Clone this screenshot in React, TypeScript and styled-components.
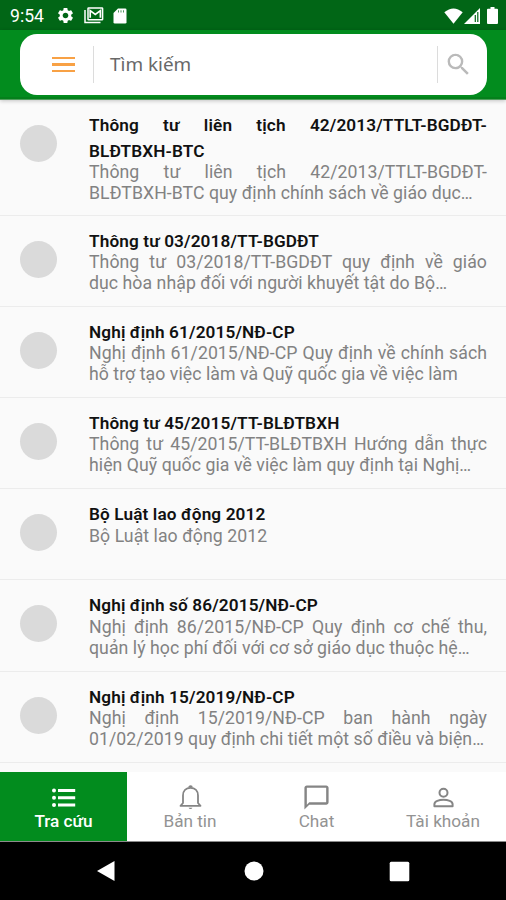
import React from "react";
import styled, { createGlobalStyle } from "styled-components";
import { MdSettings, MdSearch, MdChatBubbleOutline } from "react-icons/md";

const GlobalStyle = createGlobalStyle`
  * { box-sizing: border-box; }
  body { margin: 0; background: #fafafa; font-family: Roboto, "Noto Sans", sans-serif; }
`;

const Screen = styled.div`
  display: flex;
  flex-direction: column;
  width: 506px;
  height: 900px;
  overflow: hidden;
  background: #fafafa;
`;

const StatusBar = styled.div`
  display: flex;
  align-items: center;
  flex: 0 0 30px;
  padding: 1px 8px 0 10px;
  background: #016616;
  color: #fff;
`;

const Clock = styled.span`
  width: 46px;
  font-size: 17.6px;
  line-height: 20px;
  font-weight: 400;
`;

const StatusIcons = styled.div<{ $gap: number; $end?: boolean }>`
  display: flex;
  align-items: center;
  gap: ${(p) => p.$gap}px;
  margin-left: ${(p) => (p.$end ? "auto" : "0")};
  svg { display: block; }
`;

const BatterySlot = styled.span`
  margin-left: 6px;
`;

const AppBar = styled.header`
  flex: 0 0 69px;
  padding: 4px 19px 4px 20px;
  background: #028c1e;
  border-bottom: 1px solid #4f9f5c;
  box-shadow: inset 0 -2px 0 #04801b, 0 1px 4px rgba(0, 0, 0, 0.22);
`;

const SearchBox = styled.div`
  display: flex;
  align-items: center;
  height: 61px;
  padding: 0 14px 0 32px;
  border-radius: 17px;
  background: #fff;
`;

const Burger = styled.div`
  display: flex;
  flex-direction: column;
  gap: 4px;
  width: 23px;
`;

const BurgerLine = styled.span`
  height: 2.4px;
  background: #f8a145;
`;

const Separator = styled.span<{ $left: number; $right: number }>`
  width: 1px;
  height: 37px;
  margin: 0 ${(p) => p.$right}px 0 ${(p) => p.$left}px;
  background: #dcdcdc;
`;

const Placeholder = styled.span`
  flex: 1;
  margin-top: -2px;
  font-family: "Noto Sans", sans-serif;
  font-size: 18.9px;
  line-height: 26px;
  color: #686868;
`;

const List = styled.main`
  flex: 1;
  min-height: 0;
  overflow: hidden;
`;

const Row = styled.article`
  display: flex;
  padding: 12px 19px 10.9px 20px;
  border-bottom: 1px solid #ececec;
  min-height: 91.1px;
`;

const Avatar = styled.span`
  flex: 0 0 37px;
  height: 37px;
  margin: 13px 32px 0 0;
  border-radius: 50%;
  background: #dadada;
`;

const RowText = styled.div`
  width: 398px;
`;

const Line = styled.span<{ $fill: boolean }>`
  display: block;
  white-space: nowrap;
  text-align: justify;
  text-align-last: ${(p) => (p.$fill ? "justify" : "left")};
`;

const Title = styled.h2`
  margin: 0;
  font-size: 17.2px;
  letter-spacing: 0.12px;
  line-height: 26px;
  font-weight: 600;
  color: #111;
`;

const Summary = styled.p`
  margin: -1.8px 0 0;
  font-size: 17.7px;
  letter-spacing: 0.05px;
  line-height: 21px;
  color: #828282;
`;

const Tabs = styled.nav`
  display: grid;
  grid-template-columns: 127px 126px 127px 126px;
  flex: 0 0 70px;
  background: #fff;
  border-bottom: 1px solid #8b8b8b;
`;

const Tab = styled.div<{ $active: boolean }>`
  display: flex;
  flex-direction: column;
  align-items: center;
  padding-top: 10.5px;
  background: ${(p) => (p.$active ? "#028c1e" : "#fff")};
  color: ${(p) => (p.$active ? "#fff" : "#858585")};
  svg { display: block; }
`;

const TabLabel = styled.span<{ $active: boolean }>`
  margin-top: -0.7px;
  font-size: 17.2px;
  line-height: 20px;
  font-weight: ${(p) => (p.$active ? 500 : 400)};
  color: ${(p) => (p.$active ? "#fff" : "#939393")};
`;

const SystemNav = styled.footer`
  display: flex;
  align-items: center;
  flex: 0 0 58px;
  padding: 0 96px;
  gap: 129px;
  background: #000;

  svg:last-child { margin-left: -4px; }
`;

type Doc = { title: string[]; summary: string[] };

const docs: Doc[] = [
  {
    title: ["Thông tư liên tịch 42/2013/TTLT-BGDĐT-", "BLĐTBXH-BTC"],
    summary: ["Thông tư liên tịch 42/2013/TTLT-BGDĐT-", "BLĐTBXH-BTC quy định chính sách về giáo dục…"],
  },
  {
    title: ["Thông tư 03/2018/TT-BGDĐT"],
    summary: ["Thông tư 03/2018/TT-BGDĐT quy định về giáo", "dục hòa nhập đối với người khuyết tật do Bộ…"],
  },
  {
    title: ["Nghị định 61/2015/NĐ-CP"],
    summary: ["Nghị định 61/2015/NĐ-CP Quy định về chính sách", "hỗ trợ tạo việc làm và Quỹ quốc gia về việc làm"],
  },
  {
    title: ["Thông tư 45/2015/TT-BLĐTBXH"],
    summary: ["Thông tư 45/2015/TT-BLĐTBXH Hướng dẫn thực", "hiện Quỹ quốc gia về việc làm quy định tại Nghị…"],
  },
  { title: ["Bộ Luật lao động 2012"], summary: ["Bộ Luật lao động 2012"] },
  {
    title: ["Nghị định số 86/2015/NĐ-CP"],
    summary: ["Nghị định 86/2015/NĐ-CP Quy định cơ chế thu,", "quản lý học phí đối với cơ sở giáo dục thuộc hệ…"],
  },
  {
    title: ["Nghị định 15/2019/NĐ-CP"],
    summary: ["Nghị định 15/2019/NĐ-CP ban hành ngày", "01/02/2019 quy định chi tiết một số điều và biện…"],
  },
];

const ListIcon = () => (
  <svg width="29" height="29" viewBox="0 0 29 29" fill="currentColor">
    <circle cx="5" cy="7.5" r="2" />
    <circle cx="5" cy="14.700" r="2" />
    <circle cx="5" cy="22" r="2" />
    <path d="M9 6h17.200v3H9zM9 13.200h17.200v3H9zM9 20.500h17.200v3H9z" />
  </svg>
);

const BellIcon = () => (
  <svg width="29" height="29" viewBox="0 0 29 29" fill="none" stroke="currentColor" strokeWidth="1.800" strokeLinejoin="round">
    <path d="M4.500 22.800h20L22 20v-7.500c0-4.600-3-7.700-7.500-7.700S7 7.900 7 12.500V20z" />
    <path d="M13.100 4.600a1.400 1.400 0 0 1 2.800 0" />
    <path d="M12.600 24.700a2 2 0 0 0 3.800 0z" fill="currentColor" stroke="none" />
  </svg>
);

const PersonIcon = () => (
  <svg width="29" height="29" viewBox="0 0 29 29" fill="none" stroke="currentColor" strokeWidth="2" strokeLinejoin="round">
    <circle cx="14.500" cy="9.700" r="4" />
    <path d="M5.400 23.200v-2c0-2.800 4.700-4.400 9.100-4.400s9.100 1.600 9.100 4.400v2z" />
  </svg>
);

const ChatIcon = () => <MdChatBubbleOutline size={29} />;

const tabs = [
  { label: "Tra cứu", Icon: ListIcon },
  { label: "Bản tin", Icon: BellIcon },
  { label: "Chat", Icon: ChatIcon },
  { label: "Tài khoản", Icon: PersonIcon },
];

const Lines = ({ lines }: { lines: string[] }) => (
  <>
    {lines.map((text, i) => (
      <Line key={i} $fill={i < lines.length - 1}>{text}</Line>
    ))}
  </>
);

const MailIcon = () => (
  <svg width="20" height="17" viewBox="0 0 20 17" fill="none" stroke="#fff">
    <path d="M1 3v12.600h15.500" strokeWidth="1.500" />
    <rect x="4" y="1" width="14.600" height="11.800" rx=".6" strokeWidth="1.500" />
    <path d="M6.200 10.800V3.600l5.100 3.800 5.100-3.800v7.200" strokeWidth="1.700" />
  </svg>
);

const CardIcon = () => (
  <svg width="14" height="16" viewBox="0 0 14 16">
    <path d="M5 .5h7.200q1.300 0 1.300 1.300v12.400q0 1.300-1.300 1.300H1.800Q.5 15.500.5 14.200V5z" fill="#fff" />
    <path d="M5.500 2.300v2.200M8 2.300v2.200M10.500 2.300v2.200" stroke="#016616" strokeWidth="1" opacity=".7" />
  </svg>
);

const WifiIcon = () => (
  <svg width="19" height="16" viewBox="0 0 19 16">
    <path d="M.3 4.300Q9.500-3.300 18.700 4.300L9.500 15.800z" fill="#fff" />
  </svg>
);

const SignalIcon = () => (
  <svg width="16" height="16" viewBox="0 0 16 16">
    <path d="M0 16 16 0v16z" fill="#fff" />
    <path d="M11.300 7v7M13.800 4v10" stroke="#016616" strokeWidth="1.200" />
  </svg>
);

const BatteryIcon = () => (
  <svg width="11" height="17" viewBox="0 0 11 17">
    <path d="M3.500 0h4v1.700H10q1 0 1 1V16q0 1-1 1H1q-1 0-1-1V2.700q0-1 1-1h2.500z" fill="#fff" />
  </svg>
);

export default function App() {
  return (
    <Screen>
      <GlobalStyle />
      <StatusBar>
        <Clock>9:54</Clock>
        <StatusIcons $gap={9}>
          <MdSettings size={19} />
          <MailIcon />
          <CardIcon />
        </StatusIcons>
        <StatusIcons $gap={1} $end>
          <WifiIcon />
          <SignalIcon />
          <BatterySlot><BatteryIcon /></BatterySlot>
        </StatusIcons>
      </StatusBar>
      <AppBar>
        <SearchBox>
          <Burger>
            <BurgerLine />
            <BurgerLine />
            <BurgerLine />
          </Burger>
          <Separator $left={18} $right={16} />
          <Placeholder>Tìm kiếm</Placeholder>
          <Separator $left={0} $right={6} />
          <MdSearch size={29} color="#bababa" />
        </SearchBox>
      </AppBar>
      <List>
        {docs.map((doc) => (
          <Row key={doc.title[0]}>
            <Avatar />
            <RowText>
              <Title><Lines lines={doc.title} /></Title>
              <Summary><Lines lines={doc.summary} /></Summary>
            </RowText>
          </Row>
        ))}
      </List>
      <Tabs>
        {tabs.map(({ label, Icon }, i) => (
          <Tab key={label} $active={i === 0}>
            <Icon />
            <TabLabel $active={i === 0}>{label}</TabLabel>
          </Tab>
        ))}
      </Tabs>
      <SystemNav>
        <svg width="19" height="22" viewBox="0 0 19 22"><path d="M1 11 18.500 1v20z" fill="#fff" /></svg>
        <svg width="20" height="20" viewBox="0 0 20 20"><circle cx="10" cy="10" r="9.500" fill="#fff" /></svg>
        <svg width="21" height="21" viewBox="0 0 21 21"><rect x=".7" y=".7" width="19.600" height="19.600" rx="1.500" fill="#fff" /></svg>
      </SystemNav>
    </Screen>
  );
}
